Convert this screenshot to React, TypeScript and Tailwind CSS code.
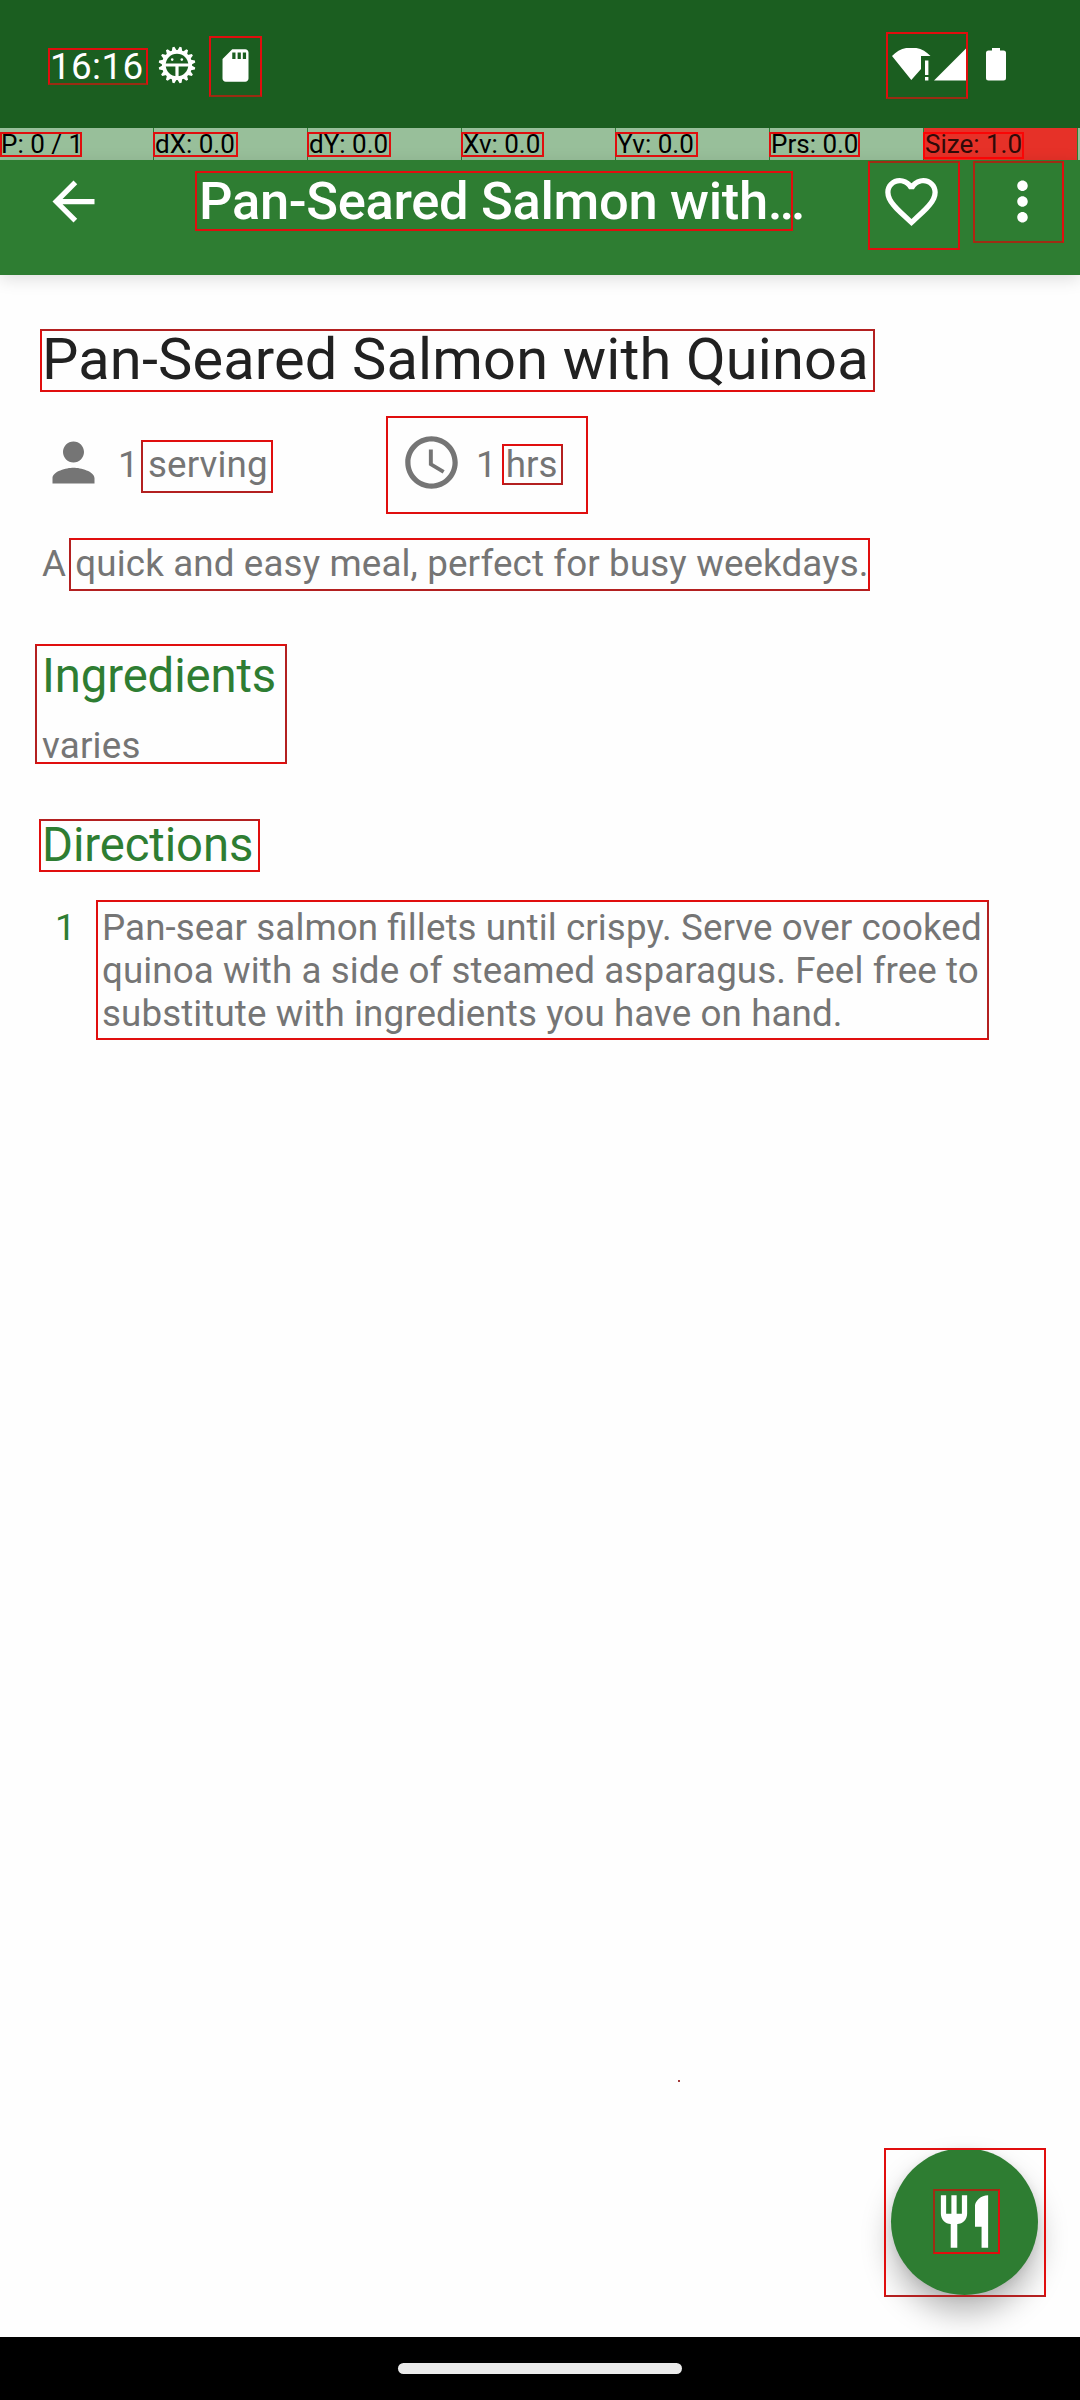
import React from "react";

const BODY = "text-[36.75px] leading-[43px] text-[#757575]";

function Mark({ className }: { className: string }) {
  return (
    <div
      className={
        "pointer-events-none absolute z-20 border-2 border-[#e00e0e] " + className
      }
    />
  );
}

function Icon({ d, className }: { d: string; className: string }) {
  return (
    <svg viewBox="0 0 24 24" fill="currentColor" className={"shrink-0 " + className}>
      <path d={d} />
    </svg>
  );
}

const teeth = Array.from({ length: 16 }, (_, i) => i * 22.5 + 11.25);

function DebugGear() {
  return (
    <svg viewBox="0 0 38 38" className="ml-[10px] h-[38px] w-[38px] shrink-0">
      {teeth.map((a) => (
        <path key={a} d="M16.2 5.5 L18 0.6 H20 L21.8 5.5 Z" fill="#fff" transform={`rotate(${a} 19 19)`} />
      ))}
      <circle cx="19" cy="19" r="13.2" fill="none" stroke="#fff" strokeWidth="3.8" />
      <path d="M7 17.600H31V20.400H20.600V31H17.400V20.400H7Z" fill="#fff" />
      <circle cx="14.200" cy="13.600" r="1.300" fill="#fff" />
      <circle cx="23.800" cy="13.600" r="1.300" fill="#fff" />
    </svg>
  );
}

function StatusBar() {
  return (
    <header className="flex h-[128px] bg-[#1b5e20] text-white">
      <div className="flex h-[130px] w-full items-center pl-[50px]">
        <span className="w-[98px] pt-[2px] text-[36.75px] leading-[43px] tracking-[0.4px]">16:16</span>
        <DebugGear />
        <Icon
          className="ml-[20px] h-[39px] w-[39px]"
          d="M18 2h-8L4.020 8 4 20c0 1.100.9 2 2 2h12c1.100 0 2-.9 2-2V4c0-1.100-.9-2-2-2zm-6 6h-2V4h2v4zm3.300 0h-2V4h2v4zm3.200 0h-2V4h2v4z"
        />
        <svg viewBox="0 0 116 34" className="ml-auto mr-[72px] h-[34px] w-[116px]" fill="#fff">
          <path d="M0 8C5 2.500 12 -0.500 19.300 -0.500C26.600 -0.500 33.500 2.500 38.500 8H29V21L19.300 32Z" />
          <path d="M33 12.500H36.400V27H33ZM33 29H36.400V32.500H33Z" />
          <path d="M42 32.500L74 0.500V32.500Z" />
          <path d="M94 5Q94 2.500 96.500 2.500H100V0H108V2.500H111.500Q114 2.500 114 5V30Q114 32.500 111.500 32.500H96.500Q94 32.500 94 30Z" />
        </svg>
      </div>
    </header>
  );
}

const stats = ["P: 0 / 1", "dX: 0.0", "dY: 0.0", "Xv: 0.0", "Yv: 0.0", "Prs: 0.0"];

function PointerBar() {
  return (
    <div className="flex h-8 gap-px bg-[#2e7d32] text-[26px] leading-[33px] text-black">
      {stats.map((s) => (
        <div key={s} className="w-[153px] whitespace-nowrap bg-[#98bf9a] pl-px">
          {s}
        </div>
      ))}
      <div className="w-[153px] whitespace-nowrap bg-[#e63128] pl-px text-[#2f0a08]">Size: 1.0</div>
      <div className="flex-1 bg-[#98bf9a]" />
    </div>
  );
}

function Toolbar() {
  return (
    <div className="flex h-[115px] items-start bg-[#2e7d32] pl-[42px] text-white shadow-[0_4px_16px_rgba(0,0,0,0.13)]">
      <div className="flex h-[83px] w-full items-center">
        <Icon className="h-[63px] w-[63px]" d="M20 11H7.830l5.590-5.590L12 4l-8 8 8 8 1.410-1.410L7.830 13H20v-2z" />
        <span className="ml-[94px] w-[681px] whitespace-nowrap pb-[2px] text-[52.5px] font-medium leading-[62px] tracking-[-0.32px]">
          Pan-Seared Salmon with…
        </span>
        <Icon
          className="h-[63px] w-[63px]"
          d="M16.500 3c-1.740 0-3.410.81-4.500 2.090C10.910 3.810 9.240 3 7.500 3 4.420 3 2 5.420 2 8.500c0 3.780 3.400 6.860 8.550 11.540L12 21.350l1.450-1.320C18.600 15.360 22 12.280 22 8.500 22 5.420 19.580 3 16.500 3zm-4.400 15.550l-.1.1-.1-.1C7.140 14.240 4 11.390 4 8.500 4 6.500 5.500 5 7.500 5c1.540 0 3.040.99 3.570 2.360h1.870C13.460 5.990 14.960 5 16.500 5c2 0 3.500 1.500 3.500 3.500 0 2.890-3.140 5.740-7.900 10.050z"
        />
        <Icon
          className="ml-[48px] h-[63px] w-[63px]"
          d="M12 8c1.100 0 2-.9 2-2s-.9-2-2-2-2 .9-2 2 .9 2 2 2zm0 2c-1.100 0-2 .9-2 2s.9 2 2 2 2-.9 2-2-.9-2-2-2zm0 6c-1.100 0-2 .9-2 2s.9 2 2 2 2-.9 2-2-.9-2-2-2z"
        />
      </div>
    </div>
  );
}

function Recipe() {
  return (
    <main className="flex-1 px-[42px] pt-[46px]">
      <h1 className="h-[76px] whitespace-nowrap text-[57.75px] leading-[76px] tracking-[0.16px] text-[#212121]">
        Pan-Seared Salmon with Quinoa
      </h1>
      <div className={"mt-[34px] flex h-[63px] items-center " + BODY}>
        <Icon
          className="h-[63px] w-[63px]"
          d="M12 12c2.210 0 4-1.790 4-4s-1.790-4-4-4-4 1.790-4 4 1.790 4 4 4zm0 2c-2.670 0-8 1.340-8 4v2h16v-2c0-2.660-5.330-4-8-4z"
        />
        <span className="ml-[13px] mt-[4px] w-[282px] tracking-[0.12px]">1 serving</span>
        <Icon
          className="h-[63px] w-[63px]"
          d="M11.990 2C6.470 2 2 6.480 2 12s4.470 10 9.990 10C17.520 22 22 17.520 22 12S17.520 2 11.990 2zM12 20c-4.420 0-8-3.580-8-8s3.580-8 8-8 8 3.580 8 8-3.580 8-8 8zm.5-13H11v6l5.250 3.150.75-1.230-4.500-2.670z"
        />
        <span className="ml-[13px] mt-[4px]">1 hrs</span>
      </div>
      <p className={"mt-[48px] tracking-[0.13px] " + BODY}>A quick and easy meal, perfect for busy weekdays.</p>
      <h2 className="mt-[63px] text-[47.25px] leading-[56px] tracking-[-0.1px] text-[#2e7d32]">Ingredients</h2>
      <p className={"mt-[20px] tracking-[0.2px] " + BODY}>varies</p>
      <h2 className="mt-[50px] text-[47.25px] leading-[56px] tracking-[-0.1px] text-[#2e7d32]">Directions</h2>
      <div className={"mt-[33px] flex " + BODY}>
        <span className="w-[60px] pl-[13px] text-[#2e7d32]">1</span>
        <p className="whitespace-nowrap tracking-[0.09px] [font-feature-settings:'liga'_1]">
          Pan-sear salmon fillets until crispy. Serve over cooked
          <br />
          quinoa with a side of steamed asparagus. Feel free to
          <br />
          substitute with ingredients you have on hand.
        </p>
      </div>
    </main>
  );
}

export default function App() {
  return (
    <div className="relative flex h-[2400px] w-[1080px] flex-col overflow-hidden bg-[#fefefe] font-['Roboto',sans-serif]">
      <StatusBar />
      <PointerBar />
      <Toolbar />
      <Recipe />

      <button className="absolute right-[42px] bottom-[105px] flex h-[147px] w-[147px] items-center justify-center rounded-full bg-[#2e7d32] text-white shadow-[0_18px_30px_rgba(0,0,0,0.28),0_2px_10px_rgba(0,0,0,0.08)]">
        <Icon
          className="h-[63px] w-[63px]"
          d="M11 9H9V2H7v7H5V2H3v7c0 2.120 1.660 3.840 3.750 3.970V22h2.500v-9.030C11.340 12.840 13 11.120 13 9V2h-2v7zm5-3v8h2.500v8H21V2c-2.760 0-5 2.240-5 4z"
        />
      </button>

      <nav className="z-10 flex h-[63px] items-center justify-center bg-black">
        <div className="h-[11px] w-[284px] rounded-full bg-[#ebebeb]" />
      </nav>

      <Mark className="left-[48px] top-[48px] h-[37px] w-[100px] border-b-[#9a2c12]" />
      <Mark className="left-[209px] top-[36px] h-[61px] w-[53px] border-b-[#9a2c12]" />
      <Mark className="left-[886px] top-[32px] h-[67px] w-[82px] border-b-[#9a2c12]" />
      <Mark className="left-0 top-[132px] h-[25px] w-[82px]" />
      <Mark className="left-[153px] top-[132px] h-[25px] w-[85px]" />
      <Mark className="left-[307px] top-[132px] h-[25px] w-[84px]" />
      <Mark className="left-[461px] top-[132px] h-[25px] w-[83px]" />
      <Mark className="left-[615px] top-[132px] h-[25px] w-[83px]" />
      <Mark className="left-[769px] top-[132px] h-[25px] w-[91px]" />
      <Mark className="left-[923px] top-[132px] h-[27px] w-[101px] border-[#fa0505]" />
      <Mark className="left-[195px] top-[171px] h-[60px] w-[598px] border-[#9e2d14]" />
      <Mark className="left-[868px] top-[161px] h-[89px] w-[92px] border-t-[#9e2d14]" />
      <Mark className="left-[973px] top-[161px] h-[82px] w-[91px] border-b-[#9e2d14] border-l-[#b02612] border-t-[#9e2d14]" />
      <Mark className="left-[40px] top-[329px] h-[63px] w-[835px] border-r-[#b32020] border-t-[#b32020]" />
      <Mark className="left-[141px] top-[440px] h-[53px] w-[132px] border-b-[#b32020] border-l-[#b32020]" />
      <Mark className="left-[386px] top-[416px] h-[98px] w-[202px]" />
      <Mark className="left-[502px] top-[444px] h-[41px] w-[61px] border-b-[#b32020] border-r-[#b32020]" />
      <Mark className="left-[69px] top-[538px] h-[53px] w-[801px] border-b-[#b32020] border-l-[#b32020]" />
      <Mark className="left-[35px] top-[644px] h-[120px] w-[252px] border-l-[#b32020] border-r-[#b32020]" />
      <Mark className="left-[39px] top-[819px] h-[53px] w-[221px] border-t-[#b32020]" />
      <Mark className="left-[96px] top-[900px] h-[140px] w-[893px] border-r-[#b32020]" />
      <Mark className="left-[884px] top-[2148px] h-[149px] w-[162px] border-b-[#b32020]" />
      <Mark className="left-[933px] top-[2189px] h-[65px] w-[67px] border-l-[#9e2d14] border-t-[#9e2d14]" />
      <div className="absolute left-[678px] top-[2080px] h-[2px] w-[2px] bg-[#a33a3a]" />
    </div>
  );
}
